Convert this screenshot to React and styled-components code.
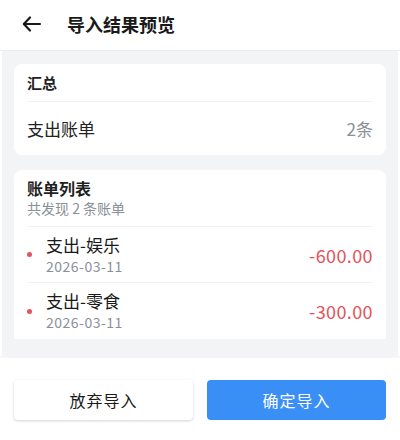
import React from 'react';
import styled, { createGlobalStyle } from 'styled-components';

const Global = createGlobalStyle`
    *, *::before, *::after { box-sizing: border-box; }
    html, body { margin: 0; padding: 0; background: #fff; }
    body { font-family: "Noto Sans CJK SC", "Noto Sans", sans-serif; color: #1f1f1f; }
`;

const Page = styled.div`
    width: 400px;
    height: 440px;
    display: flex;
    flex-direction: column;
    background: #fff;
    overflow: hidden;
`;

const Header = styled.div`
    height: 51px;
    flex: none;
    display: flex;
    align-items: center;
    padding-left: 22px;
    padding-bottom: 2px;
    gap: 25px;
    border-bottom: 1px solid #ececee;
`;

const Title = styled.div`
    font-size: 18px;
    font-weight: 700;
    color: #1a1a1a;
`;

const Body = styled.div`
    flex: 1;
    min-height: 0;
    margin: 0 2px;
    background: #f3f4f6;
    padding: 13px 12px 0;
    display: flex;
    flex-direction: column;
    gap: 15px;
    overflow: hidden;
`;

const Card = styled.div`
    background: #fff;
    border-radius: ${p => (p.clipped ? '8px 8px 0 0' : '8px')};
    padding: 0 13px;
    flex: none;
`;

const SummaryHead = styled.div`
    height: 38px;
    display: flex;
    align-items: center;
    font-size: 15px;
    font-weight: 700;
    border-bottom: 1px solid #f1f1f3;
`;

const SummaryRow = styled.div`
    height: 53px;
    display: flex;
    align-items: center;
    justify-content: space-between;
    font-size: 17px;
    color: #222;
`;

const Muted = styled.span`
    color: #8a8f99;
    font-size: ${p => p.size || 17}px;
`;

const ListHead = styled.div`
    padding: 7px 0 8px;
    border-bottom: 1px solid #f1f1f3;
    display: flex;
    flex-direction: column;
`;

const ListTitle = styled.div`
    font-size: 16px;
    font-weight: 700;
    line-height: 22px;
`;

const ListSub = styled.div`
    font-size: 14px;
    line-height: 19px;
    color: #8a8f99;
`;

const Row = styled.div`
    height: 56px;
    display: flex;
    align-items: center;
    border-bottom: ${p => (p.last ? 'none' : '1px solid #f1f1f3')};
`;

const Dot = styled.span`
    width: 5px;
    height: 5px;
    border-radius: 50%;
    background: #e5535b;
    margin-right: 14px;
    flex: none;
`;

const RowText = styled.div`
    flex: 1;
    display: flex;
    flex-direction: column;
`;

const Name = styled.div`
    font-size: 17px;
    line-height: 22px;
    color: #1a1a1a;
`;

const DateText = styled.div`
    font-size: 14px;
    line-height: 20px;
    color: #8a8f99;
    letter-spacing: 0.5px;
`;

const Amount = styled.div`
    font-size: 18px;
    color: #e5535b;
    letter-spacing: 0.4px;
`;

const Footer = styled.div`
    flex: none;
    height: 84px;
    border-top: 2px solid #f5f5f7;
    display: flex;
    align-items: flex-start;
    padding: 22px 14px 0;
    gap: 14px;
`;

const Button = styled.button`
    flex: 1;
    height: 40px;
    border: none;
    border-radius: 4px;
    font-family: inherit;
    font-size: 16px;
    letter-spacing: 1px;
    background: ${p => (p.primary ? '#3a8ff7' : '#fff')};
    color: ${p => (p.primary ? '#fff' : '#1a1a1a')};
    box-shadow: ${p => (p.primary ? 'none' : '0 1px 3px rgba(0,0,0,0.18)')};
`;

const BackIcon = () => (
    <svg width="20" height="20" viewBox="0 0 20 20" fill="none" stroke="#1a1a1a" strokeWidth="2.2" strokeLinecap="round" strokeLinejoin="round">
        <path d="M18 10H2M8 3.5L1.8 10 8 16.5" />
    </svg>
);

const bills = [
    { name: '支出-娱乐', date: '2026-03-11', amount: '-600.00' },
    { name: '支出-零食', date: '2026-03-11', amount: '-300.00' },
];

export default function App() {
    return <Page>
        <Global />
        <Header>
            <BackIcon />
            <Title>导入结果预览</Title>
        </Header>
        <Body>
            <Card>
                <SummaryHead>汇总</SummaryHead>
                <SummaryRow>
                    <span>支出账单</span>
                    <Muted>2条</Muted>
                </SummaryRow>
            </Card>
            <Card clipped>
                <ListHead>
                    <ListTitle>账单列表</ListTitle>
                    <ListSub>共发现 2 条账单</ListSub>
                </ListHead>
                {bills.map((b, i) => <Row key={i} last={i === bills.length - 1}>
                    <Dot />
                    <RowText>
                        <Name>{b.name}</Name>
                        <DateText>{b.date}</DateText>
                    </RowText>
                    <Amount>{b.amount}</Amount>
                </Row>)}
            </Card>
        </Body>
        <Footer>
            <Button>放弃导入</Button>
            <Button primary>确定导入</Button>
        </Footer>
    </Page>;
}
